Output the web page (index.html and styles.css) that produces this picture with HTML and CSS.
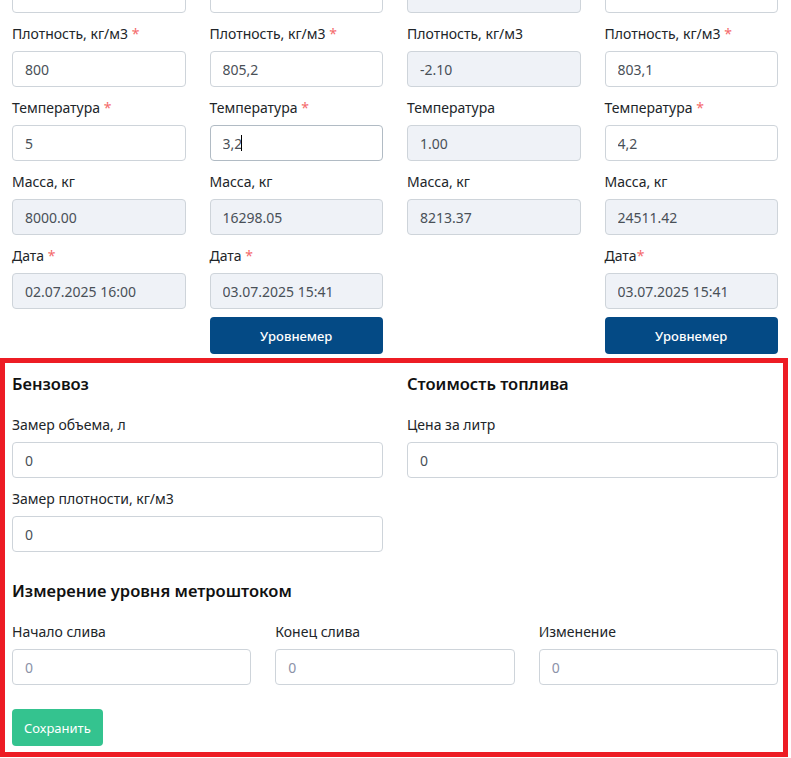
FILE: index.html
```html
<!DOCTYPE html>
<html lang="ru">
  <head>
    <meta charset="UTF-8" />
    <meta name="viewport" content="width=device-width, initial-scale=1.0" />
    <title>Приемка топлива</title>
    <link rel="stylesheet" href="styles.css">
  </head>
  <body>
    <div class="page">
      <div class="tanks">
        <!-- резервуар до слива -->
        <div class="tank-col">
          <div class="field">
            <input type="text" class="form-control" />
          </div>
          <div class="field">
            <label>Плотность, кг/м3 <span class="req">*</span></label>
            <input type="text" class="form-control" value="800" />
          </div>
          <div class="field">
            <label>Температура <span class="req">*</span></label>
            <input type="text" class="form-control" value="5" />
          </div>
          <div class="field">
            <label>Масса, кг</label>
            <input type="text" class="form-control" value="8000.00" disabled />
          </div>
          <div class="field">
            <label>Дата <span class="req">*</span></label>
            <input type="text" class="form-control" value="02.07.2025 16:00" disabled />
          </div>
        </div>

        <!-- резервуар после слива -->
        <div class="tank-col">
          <div class="field">
            <input type="text" class="form-control" />
          </div>
          <div class="field">
            <label>Плотность, кг/м3 <span class="req">*</span></label>
            <input type="text" class="form-control" value="805,2" />
          </div>
          <div class="field">
            <label>Температура <span class="req">*</span></label>
            <div class="input-wrap">
              <input type="text" class="form-control focused" value="3,2" />
              <span class="caret"></span>
            </div>
          </div>
          <div class="field">
            <label>Масса, кг</label>
            <input type="text" class="form-control" value="16298.05" disabled />
          </div>
          <div class="field">
            <label>Дата <span class="req">*</span></label>
            <input type="text" class="form-control" value="03.07.2025 15:41" disabled />
          </div>
          <button class="btn btn-level">Уровнемер</button>
        </div>

        <!-- разница -->
        <div class="tank-col">
          <div class="field">
            <input type="text" class="form-control" disabled />
          </div>
          <div class="field">
            <label>Плотность, кг/м3</label>
            <input type="text" class="form-control" value="-2.10" disabled />
          </div>
          <div class="field">
            <label>Температура</label>
            <input type="text" class="form-control" value="1.00" disabled />
          </div>
          <div class="field">
            <label>Масса, кг</label>
            <input type="text" class="form-control" value="8213.37" disabled />
          </div>
        </div>

        <!-- итог -->
        <div class="tank-col">
          <div class="field">
            <input type="text" class="form-control" />
          </div>
          <div class="field">
            <label>Плотность, кг/м3 <span class="req">*</span></label>
            <input type="text" class="form-control" value="803,1" />
          </div>
          <div class="field">
            <label>Температура <span class="req">*</span></label>
            <input type="text" class="form-control" value="4,2" />
          </div>
          <div class="field">
            <label>Масса, кг</label>
            <input type="text" class="form-control" value="24511.42" disabled />
          </div>
          <div class="field">
            <label>Дата<span class="req">*</span></label>
            <input type="text" class="form-control" value="03.07.2025 15:41" disabled />
          </div>
          <button class="btn btn-level">Уровнемер</button>
        </div>
      </div>

      <div class="highlight">
        <div class="row-2">
          <div>
            <h5 class="block-title">Бензовоз</h5>
            <div class="field">
              <label>Замер объема, л</label>
              <input type="text" class="form-control" value="0" />
            </div>
            <div class="field">
              <label>Замер плотности, кг/м3</label>
              <input type="text" class="form-control" value="0" />
            </div>
          </div>
          <div>
            <h5 class="block-title">Стоимость топлива</h5>
            <div class="field">
              <label>Цена за литр</label>
              <input type="text" class="form-control" value="0" />
            </div>
          </div>
        </div>

        <h5 class="block-title mt">Измерение уровня метроштоком</h5>
        <div class="row-3">
          <div class="field">
            <label>Начало слива</label>
            <input type="text" class="form-control" placeholder="0" />
          </div>
          <div class="field">
            <label>Конец слива</label>
            <input type="text" class="form-control" placeholder="0" />
          </div>
          <div class="field">
            <label>Изменение</label>
            <input type="text" class="form-control" placeholder="0" />
          </div>
        </div>

        <button class="btn btn-save">Сохранить</button>
      </div>
    </div>
  </body>
</html>
```

FILE: styles.css
```css
* {
  margin: 0;
  padding: 0;
  box-sizing: border-box;
  font-family: "Noto Sans", Roboto, sans-serif;
}
body {
  background: #fff;
  color: #212529;
  font-size: 14px;
}
.page {
  width: 778px;
  padding-left: 12px;
  margin-top: -23px;
}
.tanks {
  display: grid;
  grid-template-columns: repeat(4, 1fr);
  column-gap: 24px;
}
.tank-col {
  display: flex;
  flex-direction: column;
}
.field {
  margin-bottom: 10px;
}
.field label {
  display: block;
  line-height: 21px;
  margin-bottom: 7px;
  color: #212529;
}
.req {
  color: #f46a6a;
}
.form-control {
  display: block;
  width: 100%;
  height: 36px;
  padding: 0 12px;
  font-size: 14px;
  color: #495057;
  background: #fff;
  border: 1px solid #ced4da;
  border-radius: 4px;
  outline: none;
}
.form-control:disabled {
  background: #eff2f7;
  color: #495057;
  -webkit-text-fill-color: #495057;
  opacity: 1;
}
.form-control::placeholder {
  color: #8c92a8;
}
.form-control.focused {
  border-color: #b1bbc4;
}
.input-wrap {
  position: relative;
}
.caret {
  position: absolute;
  left: 31px;
  top: 10px;
  width: 1px;
  height: 16px;
  background: #000;
}
.btn {
  border: none;
  border-radius: 4px;
  color: #fff;
  font-size: 13px;
  font-weight: 500;
  cursor: pointer;
}
.btn-level {
  height: 37px;
  margin-top: -2px;
  background: #044a85;
}
.highlight {
  margin: 4px -10px 0 -12px;
  border: 5px solid #ed1c24;
  padding: 11px 5px 6px 7px;
}
.row-2 {
  display: grid;
  grid-template-columns: 1fr 1fr;
  column-gap: 24px;
}
.row-3 {
  display: grid;
  grid-template-columns: repeat(3, 1fr);
  column-gap: 24px;
  margin-top: 1px;
}
.block-title {
  font-size: 16.5px;
  font-weight: 600;
  line-height: 20px;
  margin-bottom: 20px;
  color: #111;
}
.block-title.mt {
  margin-top: 19px;
}
.btn-save {
  height: 37px;
  margin-top: 14px;
  padding: 0 12px;
  background: #34c38f;
  font-weight: 400;
}
```
